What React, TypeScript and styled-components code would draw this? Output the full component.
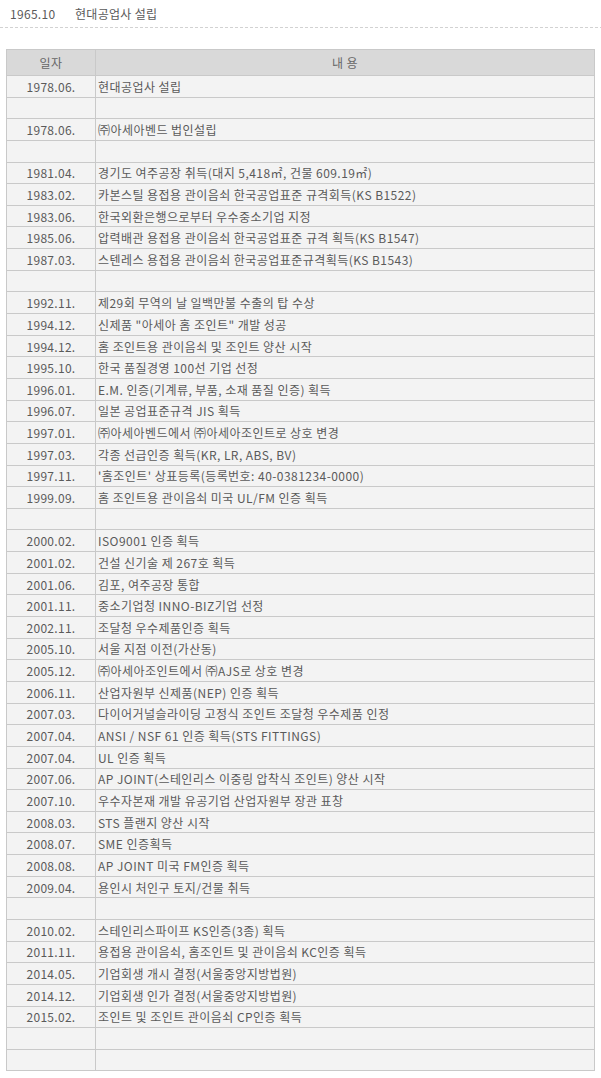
import styled, { createGlobalStyle } from "styled-components"

const GlobalStyle = createGlobalStyle`
    body {
        margin: 0;
        background: #fff;
        font-family: "Noto Sans CJK KR", "Noto Sans", sans-serif;
        font-size: 12px;
        color: #5a5a5a;
    }
`

const Page = styled.div`
    width: 601px;
`

const Intro = styled.div`
    display: flex;
    align-items: center;
    height: 27px;
    padding-left: 10px;
    box-sizing: border-box;
    letter-spacing: 0.3px;
`

const IntroDate = styled.span`
    width: 65px;
`

const DashedRule = styled.div`
    height: 1px;
    background: repeating-linear-gradient(to right, #d2d2d2 0 3px, transparent 3px 5px);
`

const HistoryTable = styled.table`
    margin: 21px 0 0 6px;
    width: 589px;
    border-collapse: collapse;
    table-layout: fixed;
    border: 1px solid #c9c9c9;
`

const HeadCell = styled.th<{ $w?: number }>`
    width: ${p => (p.$w ? `${p.$w}px` : "auto")};
    height: 25px;
    padding: 0;
    background: #d9d9d9;
    border: 1px solid #c9c9c9;
    font-weight: normal;
    color: #666;
    text-align: center;
    letter-spacing: 0.4px;
`

const Row = styled.tr`
    height: 21.65px;
`

const DateCell = styled.td`
    padding: 0;
    background: #f3f3f3;
    border: 1px solid #c9c9c9;
    text-align: center;
    white-space: nowrap;
    letter-spacing: 0.3px;
`

const TextCell = styled.td`
    padding: 0 0 0 2px;
    background: #f3f3f3;
    border: 1px solid #c9c9c9;
    text-align: left;
    white-space: nowrap;
    overflow: hidden;
    letter-spacing: 0.45px;
`

const history: [string, string][] = [
    ["1978.06.", "현대공업사 설립"],
    ["", ""],
    ["1978.06.", "㈜아세아벤드 법인설립"],
    ["", ""],
    ["1981.04.", "경기도 여주공장 취득(대지 5,418㎡, 건물 609.19㎡)"],
    ["1983.02.", "카본스틸 용접용 관이음쇠 한국공업표준 규격회득(KS B1522)"],
    ["1983.06.", "한국외환은행으로부터 우수중소기업 지정"],
    ["1985.06.", "압력배관 용접용 관이음쇠 한국공업표준 규격 획득(KS B1547)"],
    ["1987.03.", "스텐레스 용접용 관이음쇠 한국공업표준규격획득(KS B1543)"],
    ["", ""],
    ["1992.11.", "제29회 무역의 날 일백만불 수출의 탑 수상"],
    ["1994.12.", "신제품 \"아세아 홈 조인트\" 개발 성공"],
    ["1994.12.", "홈 조인트용 관이음쇠 및 조인트 양산 시작"],
    ["1995.10.", "한국 품질경영 100선 기업 선정"],
    ["1996.01.", "E.M. 인증(기계류, 부품, 소재 품질 인증) 획득"],
    ["1996.07.", "일본 공업표준규격 JIS 획득"],
    ["1997.01.", "㈜아세아벤드에서 ㈜아세아조인트로 상호 변경"],
    ["1997.03.", "각종 선급인증 획득(KR, LR, ABS, BV)"],
    ["1997.11.", "'홈조인트' 상표등록(등록번호: 40-0381234-0000)"],
    ["1999.09.", "홈 조인트용 관이음쇠 미국 UL/FM 인증 획득"],
    ["", ""],
    ["2000.02.", "ISO9001 인증 획득"],
    ["2001.02.", "건설 신기술 제 267호 획득"],
    ["2001.06.", "김포, 여주공장 통합"],
    ["2001.11.", "중소기업청 INNO-BIZ기업 선정"],
    ["2002.11.", "조달청 우수제품인증 획득"],
    ["2005.10.", "서울 지점 이전(가산동)"],
    ["2005.12.", "㈜아세아조인트에서 ㈜AJS로 상호 변경"],
    ["2006.11.", "산업자원부 신제품(NEP) 인증 획득"],
    ["2007.03.", "다이어거널슬라이딩 고정식 조인트 조달청 우수제품 인정"],
    ["2007.04.", "ANSI / NSF 61 인증 획득(STS FITTINGS)"],
    ["2007.04.", "UL 인증 획득"],
    ["2007.06.", "AP JOINT(스테인리스 이중링 압착식 조인트) 양산 시작"],
    ["2007.10.", "우수자본재 개발 유공기업 산업자원부 장관 표창"],
    ["2008.03.", "STS 플랜지 양산 시작"],
    ["2008.07.", "SME 인증획득"],
    ["2008.08.", "AP JOINT 미국 FM인증 획득"],
    ["2009.04.", "용인시 처인구 토지/건물 취득"],
    ["", ""],
    ["2010.02.", "스테인리스파이프 KS인증(3종) 획득"],
    ["2011.11.", "용접용 관이음쇠, 홈조인트 및 관이음쇠 KC인증 획득"],
    ["2014.05.", "기업회생 개시 결정(서울중앙지방법원)"],
    ["2014.12.", "기업회생 인가 결정(서울중앙지방법원)"],
    ["2015.02.", "조인트 및 조인트 관이음쇠 CP인증 획득"],
    ["", ""],
    ["", ""],
]

export default function App() {
    return <Page>
        <GlobalStyle />
        <Intro><IntroDate>1965.10</IntroDate>현대공업사 설립</Intro>
        <DashedRule />
        <HistoryTable>
            <thead>
                <tr>
                    <HeadCell $w={88}>일자</HeadCell>
                    <HeadCell>내 용</HeadCell>
                </tr>
            </thead>
            <tbody>
                {history.map(([date, text], i) => (
                    <Row key={i}>
                        <DateCell>{date}</DateCell>
                        <TextCell>{text}</TextCell>
                    </Row>
                ))}
            </tbody>
        </HistoryTable>
    </Page>
}
